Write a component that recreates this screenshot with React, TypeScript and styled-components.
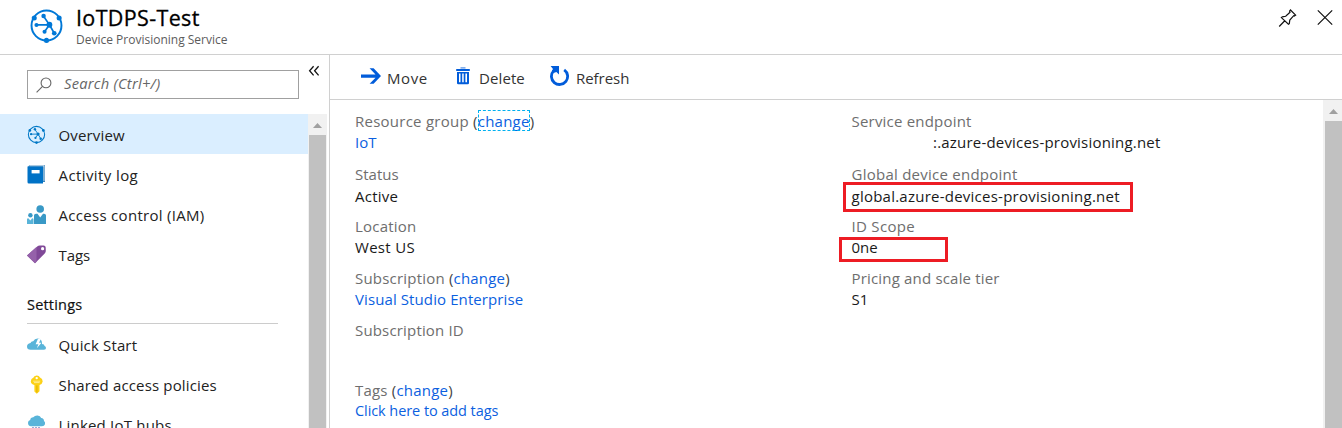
import React from 'react';
import styled, { createGlobalStyle } from 'styled-components';

const Global = createGlobalStyle`
  * { box-sizing: border-box; }
  body { margin: 0; background: #fff; overflow: hidden; }
`;

const Page = styled.div`
  width: 1342px;
  height: 428px;
  overflow: hidden;
  display: flex;
  flex-direction: column;
  background: #fff;
  color: #000;
  font-family: "Open Sans", "Noto Sans", sans-serif;
  font-size: 15px;
`;

const Header = styled.header`
  flex: none;
  height: 55px;
  border-bottom: 1px solid #d0d0d0;
  display: flex;
  align-items: flex-start;
  padding: 8px 8px 0 29px;
`;

const Titles = styled.div`
  flex: 1;
  padding-left: 12px;
`;

const Title = styled.h1`
  margin: -3px 0 0;
  font-size: 21.5px;
  font-weight: 500;
  line-height: 26px;
  letter-spacing: 0.35px;
  -webkit-text-stroke: 0.3px #000;
`;

const Subtitle = styled.div`
  font-size: 12px;
  line-height: 17px;
  color: #5c5c5c;
`;

const HeaderIcons = styled.div`
  display: flex;
  gap: 20px;
  padding-top: 1px;
  margin-right: 1px;
`;

const Body = styled.div`
  flex: 1;
  min-height: 0;
  display: flex;
`;

const Sidebar = styled.nav`
  width: 330px;
  flex: none;
  border-right: 1px solid #d0d0d0;
  display: flex;
  flex-direction: column;
`;

const SearchRow = styled.div`
  flex: none;
  height: 59px;
  padding: 15px 9px 0 27px;
  display: flex;
  align-items: flex-start;
  justify-content: space-between;

  > svg { margin-top: -5px; }
`;

const SearchBox = styled.div`
  width: 272px;
  height: 29px;
  border: 1px solid #a0a0a0;
  display: flex;
  align-items: center;
  padding-left: 8px;
  gap: 12px;
  color: #666;
  font-style: italic;
  font-size: 14.7px;
  line-height: 25px;
  padding-bottom: 2px;

  svg { margin-top: 2px; }
`;

const NavArea = styled.div`
  flex: 1;
  min-height: 0;
  display: flex;
`;

const NavList = styled.div`
  width: 308px;
  overflow: hidden;
`;

const NavItem = styled.div<{ $active?: boolean }>`
  height: 40px;
  display: flex;
  align-items: center;
  padding: 2px 0 0 27px;
  gap: 12.5px;
  background: ${p => (p.$active ? '#daeeff' : 'transparent')};
  color: #222;

  svg { flex: none; margin-top: -2px; }
`;

const Text = styled.span<{ $ls?: number }>`
  letter-spacing: ${p => p.$ls ?? 0}px;
  white-space: pre;
`;

const GroupTitle = styled.div`
  margin: 9px 30px 0 27px;
  height: 41px;
  padding-top: 12px;
  border-bottom: 1px solid #ccc;
  line-height: 20px;
  font-size: 14.5px;
  font-weight: 500;
  letter-spacing: 0.2px;
  -webkit-text-stroke: 0.2px #111;
  color: #111;
`;

const ScrollTrack = styled.div<{ $pad: string }>`
  flex: none;
  width: 19px;
  background: #f1f1f1;
  display: flex;
  flex-direction: column;
  padding: ${p => p.$pad};
`;

const ScrollArrow = styled.div`
  flex: none;
  height: 21px;
  display: flex;
  align-items: center;
  justify-content: center;
  padding-top: 2px;
`;

const ScrollThumb = styled.div`
  flex: 1;
  background: #c1c1c1;
`;

const Main = styled.main`
  flex: 1;
  min-width: 0;
  display: flex;
  flex-direction: column;
`;

const Toolbar = styled.div`
  flex: none;
  height: 45px;
  border-bottom: 1px solid #d0d0d0;
  display: flex;
  padding-left: 31px;
`;

const Command = styled.div<{ $width: number; $gap: number }>`
  width: ${p => p.$width}px;
  display: flex;
  align-items: flex-start;
  gap: ${p => p.$gap}px;
  color: #333;
  line-height: 20px;
  padding-top: 13px;

  svg { flex: none; margin-top: -2px; }
`;

const Content = styled.div`
  flex: 1;
  min-height: 0;
  display: flex;
`;

const Essentials = styled.div`
  flex: 1;
  display: grid;
  grid-template-columns: 496.5px 1fr;
  padding: 11px 0 0 25px;
`;

const Column = styled.div`
  display: flex;
  flex-direction: column;
`;

const Field = styled.div<{ $height?: number; $line?: number }>`
  height: ${p => p.$height ?? 52.25}px;
  line-height: ${p => p.$line ?? 21.5}px;
`;

const Label = styled.div<{ $ls?: number }>`
  color: #6e6e6e;
  white-space: pre;
  letter-spacing: ${p => p.$ls ?? 0}px;
`;

const Paren = styled.span`
  color: #444;
`;

const Link = styled.span<{ $focused?: boolean }>`
  color: #0c5fe0;
  position: relative;

  &::after {
    content: "";
    display: ${p => (p.$focused ? 'block' : 'none')};
    position: absolute;
    inset: -1px 0 0 0;
    border: 1px dashed #00b0f0;
  }
`;

const Value = styled.div<{ $indent?: number; $ls?: number; $size?: number }>`
  color: #1a1a1a;
  padding-left: ${p => p.$indent ?? 0}px;
  letter-spacing: ${p => p.$ls ?? 0}px;
  font-size: ${p => p.$size ?? 15}px;
  position: relative;
`;

const Highlight = styled.div<{ $left: number; $top: number; $w: number; $h: number }>`
  position: absolute;
  left: ${p => p.$left}px;
  top: ${p => p.$top}px;
  width: ${p => p.$w}px;
  height: ${p => p.$h}px;
  border: 3px solid #ed1c24;
`;

const HubIcon = ({ size, color }: { size: number; color: string }) => (
  <svg width={size} height={size} viewBox="0 0 34 36" fill="none" stroke={color}>
    <circle cx="17" cy="18" r="15.4" strokeWidth="2" />
    <path d="M20 17.2 14 8.5M20 17.2 6.7 17.4M20 17.2 15 24.5M20 17.2 25 26" strokeWidth="1.7" />
    <g fill={color} stroke="none">
      <circle cx="20" cy="17.2" r="3" />
      <circle cx="14" cy="8.2" r="2.3" />
      <circle cx="6.7" cy="17.4" r="2.1" />
      <circle cx="15" cy="24.5" r="2.1" />
      <circle cx="25" cy="26" r="2.4" />
      <circle cx="4.4" cy="10.2" r="2.6" />
      <circle cx="30" cy="10.2" r="2.6" />
      <circle cx="17" cy="33.3" r="2.6" />
    </g>
  </svg>
);

const PinIcon = () => (
  <svg width="19" height="19" viewBox="0 0 19 19" fill="none" stroke="#111" strokeWidth="1.2">
    <path d="M1.2 17.5 7 11.5M12.5 1 17.6 6.1 16.3 7 15.7 6.7 11.8 11 11.3 14.6 10.4 15.3 3.4 8.6 4.4 7.8 7.7 7.3 12 3.3 11.6 2.2Z" />
  </svg>
);

const CloseIcon = () => (
  <svg width="16" height="17" viewBox="0 0 16 17" fill="none" stroke="#111" strokeWidth="1.2">
    <path d="M.8 1.3 15.2 15.7M15.2 1.3.8 15.7" />
  </svg>
);

const SearchIcon = () => (
  <svg width="16" height="16" viewBox="0 0 16 16" fill="none" stroke="#666" strokeWidth="1.1">
    <circle cx="10" cy="5.9" r="4.9" />
    <path d="M6.5 9.4.6 15.3" />
  </svg>
);

const CollapseIcon = () => (
  <svg width="12" height="12" viewBox="0 0 12 12" fill="none" stroke="#111" strokeWidth="1.3">
    <path d="M5.6 1.2 1.6 5.8 5.6 10.4M10.6 1.2 6.6 5.8 10.6 10.4" />
  </svg>
);

const LogIcon = () => (
  <svg width="19" height="19" viewBox="0 0 19 19">
    <path d="M2.2.2H18V17h-2V2H1Z" fill="#3f86bb" />
    <path d="M2.5.9H17v15" fill="none" stroke="#fff" strokeWidth=".7" />
    <path d="M.5 1.6H16V18.5H1.8Q.5 18.5.5 17Z" fill="#0072c6" />
    <rect x="4.6" y="5" width="8" height="3.4" fill="#fff" />
  </svg>
);

const PeopleIcon = () => (
  <svg width="19" height="19" viewBox="0 0 19 19">
    <circle cx="13.2" cy="4" r="3.8" fill="#3999c6" />
    <path d="M7 19V10.5Q7 8.7 9 8.7H10.5L13.2 12.5 16 8.7H17Q19 8.7 19 10.5V19Z" fill="#3999c6" />
    <circle cx="3.4" cy="10.3" r="2.2" fill="#3999c6" />
    <path d="M0 19V14.6Q0 13.2 1.3 13.2L3.4 15.5 5.2 13.2Q6.5 13.2 6.5 14.6V19Z" fill="#59b4d9" />
  </svg>
);

const TagIcon = () => (
  <svg width="19" height="19" viewBox="0 0 19 19">
    <path d="M0 10.5 10.2 1.4Q11.3.4 12.8.4L16.6.5Q18.6.6 18.7 2.6L18.8 6Q18.8 7.4 17.7 8.5L8 18.2Z" fill="#804998" />
    <path d="M0 10.5 9.5 2V16.7L8 18.2Z" fill="#9561aa" />
    <circle cx="15.6" cy="3.7" r="1.6" fill="#fff" />
  </svg>
);

const QuickIcon = () => (
  <svg width="19" height="19" viewBox="0 0 19 19">
    <path d="M3.7 14.8Q0 14.6 0 11.4 0 8.6 3.5 8 4 6.1 6.2 6.2 7.6 3.5 10.6 3.5 14.4 3.5 15 7.5V9Q17.4 9.2 17.6 11 19 11.5 19 13 19 14.8 17 14.8Z" fill="#59b4d9" />
    <path d="M11 3.8 8.6 9.3H11.4L9.8 13.3 14.5 7.7H12L14 3.8Z" fill="#fff" />
  </svg>
);

const KeyIcon = () => (
  <svg width="19" height="19" viewBox="0 0 19 19">
    <path d="M9.5.4Q12 .2 13 2.6 15.7 3.5 15.7 6.4 15.4 8.7 12.5 10.1V16.3L9.8 18.8 7.4 16.5V10.1Q4 9 3.8 6.4 3.9 3.4 6.3 2.7 7 .5 9.5.4Z" fill="#fcd116" />
    <circle cx="9.7" cy="3.1" r="1.2" fill="#fff" />
    <path d="M6.2 6.2h7M7 7.6h5.6" stroke="#fff3b0" strokeWidth=".8" />
    <path d="M9.9 10.4v7" stroke="#dfae00" strokeWidth="1" />
  </svg>
);

const RainIcon = () => (
  <svg width="19" height="19" viewBox="0 0 19 19">
    <path d="M4 11.3Q1 11 1 7.8 1 5.5 3.2 5 3.5 2.2 6.3 2.2 7.8.2 10.6.4 13.3.5 14.2 3 17 3.4 17 6 18.5 7 18 9.2 17.3 11.3 15 11.3Z" fill="#59b4d9" />
    <path d="M6 12v4M9 12v6M12 12v5" stroke="#4a66b5" strokeWidth="1.1" />
  </svg>
);

const MoveIcon = () => (
  <svg width="20" height="20" viewBox="0 0 20 20" fill="#015cda">
    <path d="M0 8.4H14.5L8.6 2.3H12.6L20 10 12.6 17.7H8.6L14.5 11.8H0Z" />
  </svg>
);

const TrashIcon = () => (
  <svg width="14" height="20" viewBox="0 0 14 20" fill="#015cda">
    <path d="M4.5 1.2H9.5V2.6H4.5Z" opacity=".6" />
    <path d="M.2 3H13.8V5H.2Z" />
    <path d="M1 6H13V17Q13 18.3 11.8 18.3H2.2Q1 18.3 1 17ZM3 7.6V16.2H4.5V7.6ZM6.2 7.6V16.2H7.7V7.6ZM9.4 7.6V16.2H11V7.6Z" fillRule="evenodd" />
  </svg>
);

const RefreshIcon = () => (
  <svg width="20" height="21" viewBox="0 0 20 21">
    <path d="M14.2 3.8A8.1 8.1 0 1 1 3.6 4.9" fill="none" stroke="#015cda" strokeWidth="2.8" />
    <path d="M.6.1H9V8.6L6.4 5.9 4.2 6.8 1.9 4.7 3 2.9Z" fill="#015cda" />
  </svg>
);

const UpArrow = () => (
  <svg width="9" height="5" viewBox="0 0 9 5"><path d="M0 5 4.5 0 9 5Z" fill="#a0a0a0" /></svg>
);

const Change = ({ focused }: { focused?: boolean }) => (
  <><Paren> (</Paren><Link $focused={focused}>change</Link><Paren>)</Paren></>
);

export default function App() {
  return (
    <Page>
      <Global />
      <Header>
        <HubIcon size={35} color="#0078d7" />
        <Titles>
          <Title>IoTDPS-Test</Title>
          <Subtitle>Device Provisioning Service</Subtitle>
        </Titles>
        <HeaderIcons><PinIcon /><CloseIcon /></HeaderIcons>
      </Header>
      <Body>
        <Sidebar>
          <SearchRow>
            <SearchBox><SearchIcon /><Text $ls={0.25}>Search (Ctrl+/)</Text></SearchBox>
            <CollapseIcon />
          </SearchRow>
          <NavArea>
            <NavList>
              <NavItem $active><HubIcon size={19} color="#0078c6" /><Text $ls={0.15}>Overview</Text></NavItem>
              <NavItem><LogIcon /><Text $ls={0.4}>Activity log</Text></NavItem>
              <NavItem><PeopleIcon /><Text $ls={0.3}>Access control (IAM)</Text></NavItem>
              <NavItem><TagIcon /><Text $ls={-0.1}>Tags</Text></NavItem>
              <GroupTitle>Settings</GroupTitle>
              <NavItem><QuickIcon /><Text $ls={0.15}>Quick Start</Text></NavItem>
              <NavItem><KeyIcon /><Text $ls={0.15}>Shared access policies</Text></NavItem>
              <NavItem><RainIcon /><Text $ls={0.2}>Linked IoT hubs</Text></NavItem>
            </NavList>
            <ScrollTrack $pad="0 1px"><ScrollArrow><UpArrow /></ScrollArrow><ScrollThumb /></ScrollTrack>
          </NavArea>
        </Sidebar>
        <Main>
          <Toolbar>
            <Command $width={95} $gap={6}><MoveIcon /><Text $ls={0.6}>Move</Text></Command>
            <Command $width={94} $gap={9}><TrashIcon /><Text $ls={0.1}>Delete</Text></Command>
            <Command $width={100} $gap={6}><RefreshIcon /><Text $ls={-0.05}>Refresh</Text></Command>
          </Toolbar>
          <Content>
            <Essentials>
              <Column>
                <Field $line={21}><Label $ls={0.25}>Resource group<Change focused /></Label><Value><Link>IoT</Link></Value></Field>
                <Field $line={22}><Label>Status</Label><Value $ls={0.25}>Active</Value></Field>
                <Field><Label $ls={0.2}>Location</Label><Value $ls={0.3}>West US</Value></Field>
                <Field><Label $ls={0.2}>Subscription<Change /></Label><Value $ls={0.1}><Link>Visual Studio Enterprise</Link></Value></Field>
                <Field $height={60}><Label $ls={0.17}>Subscription ID</Label></Field>
                <Field $line={20.5}><Label $ls={0.2}>Tags<Change /></Label><Value $size={14.5} $ls={-0.07}><Link>Click here to add tags</Link></Value></Field>
              </Column>
              <Column>
                <Field $line={21}><Label $ls={0.2}>Service endpoint</Label><Value $indent={81.5} $ls={0.2}>:.azure-devices-provisioning.net</Value></Field>
                <Field $line={22}><Label $ls={0.25}>Global device endpoint</Label>
                  <Value $ls={0.24}>global.azure-devices-provisioning.net<Highlight $left={-8.5} $top={-3.5} $w={290} $h={30} /></Value></Field>
                <Field><Label $ls={0.3}>ID Scope</Label>
                  <Value>0ne<Highlight $left={-12.5} $top={0} $w={109} $h={25} /></Value></Field>
                <Field><Label $ls={0.18}>Pricing and scale tier</Label><Value>S1</Value></Field>
              </Column>
            </Essentials>
            <ScrollTrack $pad="0 0 0 2px"><ScrollArrow><UpArrow /></ScrollArrow><ScrollThumb /></ScrollTrack>
          </Content>
        </Main>
      </Body>
    </Page>
  );
}
